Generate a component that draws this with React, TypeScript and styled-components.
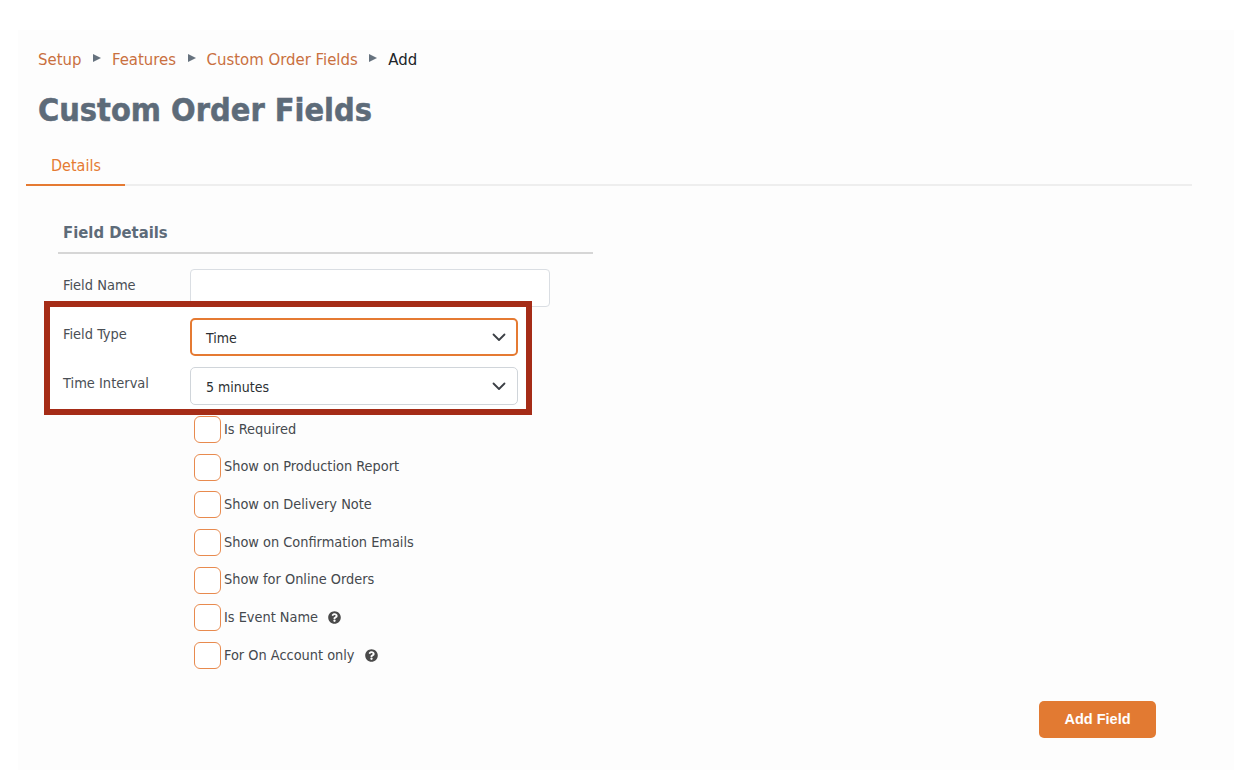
import React from 'react';
import styled, { createGlobalStyle } from 'styled-components';
import { FaQuestionCircle } from 'react-icons/fa';

const crumbs = ['Setup', 'Features', 'Custom Order Fields'];

const options = [
    { label: 'Is Required' },
    { label: 'Show on Production Report' },
    { label: 'Show on Delivery Note' },
    { label: 'Show on Confirmation Emails' },
    { label: 'Show for Online Orders' },
    { label: 'Is Event Name', help: true },
    { label: 'For On Account only', help: true },
];

const App = () => {
    return (
        <>
            <GlobalStyle />
            <StPanel>
                <StBreadcrumb>
                    {crumbs.map(crumb => (
                        <React.Fragment key={crumb}>
                            <StCrumb href="#">{crumb}</StCrumb>
                            <StArrow />
                        </React.Fragment>
                    ))}
                    <StCurrent>Add</StCurrent>
                </StBreadcrumb>
                <StTitle>Custom Order Fields</StTitle>
                <StTabs>
                    <StTab>Details</StTab>
                </StTabs>
                <StSection>
                    <StSectionTitle>Field Details</StSectionTitle>
                    <StForm>
                        <StRow>
                            <StLabel>Field Name</StLabel>
                            <StInput type="text" />
                        </StRow>
                        <StHighlight />
                        <StRow>
                            <StLabel>Field Type</StLabel>
                            <StSelect focused>
                                Time
                                <Chevron />
                            </StSelect>
                        </StRow>
                        <StRow>
                            <StLabel>Time Interval</StLabel>
                            <StSelect>
                                5 minutes
                                <Chevron />
                            </StSelect>
                        </StRow>
                        <StChecks>
                            {options.map(option => (
                                <StCheckRow key={option.label}>
                                    <StCheckbox type="checkbox" />
                                    <StCheckText>{option.label}</StCheckText>
                                    {option.help && <StHelp><FaQuestionCircle /></StHelp>}
                                </StCheckRow>
                            ))}
                        </StChecks>
                    </StForm>
                </StSection>
                <StFooter>
                    <StButton>Add Field</StButton>
                </StFooter>
            </StPanel>
        </>
    );
};

const Chevron = () => (
    <svg width="14" height="9" viewBox="0 0 14 9" fill="none" stroke="#3b3f45" strokeWidth="1.8" strokeLinecap="round" strokeLinejoin="round">
        <path d="M1.5 1.5 L7 7 L12.5 1.5" />
    </svg>
);

const GlobalStyle = createGlobalStyle`
    html, body {
        margin: 0;
        padding: 0;
        background: #ffffff;
    }
    body {
        font-family: "DejaVu Sans Condensed", "DejaVu Sans", sans-serif;
        font-stretch: condensed;
        color: #212529;
    }
    * {
        box-sizing: border-box;
    }
`;

const StPanel = styled.div`
    width: 1216px;
    height: 740px;
    margin: 30px 0 0 18px;
    padding: 18px 42px 0 8px;
    background: #fdfdfd;
`;

const StBreadcrumb = styled.div`
    display: flex;
    align-items: center;
    height: 24px;
    padding: 0 0 1px 12px;
    font-size: 16.6px;
`;

const StCrumb = styled.a`
    color: #c9703f;
    text-decoration: none;
`;

const StArrow = styled.span`
    width: 0;
    height: 0;
    margin: -3px 11px 0 11.5px;
    border-style: solid;
    border-width: 4px 0 4px 8px;
    border-color: transparent transparent transparent #66727e;
`;

const StCurrent = styled.span`
    color: #212529;
`;

const StTitle = styled.h1`
    margin: 15px 0 0 12px;
    height: 46px;
    font-size: 32.2px;
    line-height: 46px;
    font-weight: 700;
    color: #5d6b79;
    -webkit-text-stroke: 0.5px #5d6b79;
`;

const StTabs = styled.div`
    display: flex;
    height: 43px;
    margin-top: 10px;
    border-bottom: 2px solid #eeeeee;
`;

const StTab = styled.div`
    width: 99px;
    height: 43px;
    padding: 11px 0 0 25px;
    font-size: 16px;
    line-height: 24px;
    color: #e57a32;
    border-bottom: 2px solid #e57a32;
`;

const StSection = styled.div`
    width: 535px;
    margin: 31px 0 0 32px;
`;

const StSectionTitle = styled.h2`
    margin: 0;
    height: 37px;
    padding-left: 5px;
    font-size: 16.5px;
    line-height: 31px;
    font-weight: 700;
    color: #5d6b79;
    border-bottom: 2px solid #d6d6d6;
`;

const StForm = styled.div`
    position: relative;
    padding-top: 15px;
`;

const StHighlight = styled.div`
    position: absolute;
    top: 47px;
    left: -14px;
    width: 488px;
    height: 114px;
    background: #ffffff;
    border: 6px solid #a52c17;
`;

const StRow = styled.div`
    position: relative;
    display: flex;
    align-items: flex-start;
    margin-bottom: 11px;
`;

const StLabel = styled.label`
    width: 132px;
    padding: 6px 0 0 5px;
    font-size: 14.5px;
    line-height: 20px;
    color: #4a4f55;
`;

const StInput = styled.input`
    width: 360px;
    height: 38px;
    background: #ffffff;
    border: 1px solid #dadee3;
    border-radius: 4px;
    outline: none;
`;

const StSelect = styled.div<{ focused?: boolean }>`
    display: flex;
    align-items: center;
    justify-content: space-between;
    width: 328px;
    height: 38px;
    padding: 1px ${props => (props.focused ? '10px' : '11px')} 0 ${props => (props.focused ? '14px' : '15px')};
    background: #ffffff;
    font-size: 14px;
    color: #2b2f33;
    border: ${props => (props.focused ? '2px solid #e57a32' : '1px solid #d0d5da')};
    border-radius: 5px;
`;

const StChecks = styled.div`
    display: flex;
    flex-direction: column;
    gap: 10.7px;
    padding-left: 136px;
    margin-top: 1px;
`;

const StCheckRow = styled.label`
    position: relative;
    display: flex;
    align-items: center;
    height: 27px;
    font-size: 14.4px;
    color: #45494e;
`;

const StCheckText = styled.span`
    padding-bottom: 2px;
`;

const StCheckbox = styled.input`
    appearance: none;
    width: 27px;
    height: 27px;
    margin: 0 3px 0 0;
    background: #ffffff;
    border: 1px solid #e88a4e;
    border-radius: 6px;
`;

const StHelp = styled.span`
    display: inline-flex;
    margin-left: 10px;
    font-size: 13px;
    color: #4a4a4a;
`;

const StFooter = styled.div`
    display: flex;
    justify-content: flex-end;
    margin-top: 32px;
    padding-right: 36px;
`;

const StButton = styled.button`
    width: 117px;
    height: 37px;
    padding: 0 0 2px;
    background: #e27a32;
    border: none;
    border-radius: 5px;
    font-family: "Liberation Sans", sans-serif;
    font-size: 14.5px;
    font-weight: 700;
    color: #ffffff;
`;

export default App;
